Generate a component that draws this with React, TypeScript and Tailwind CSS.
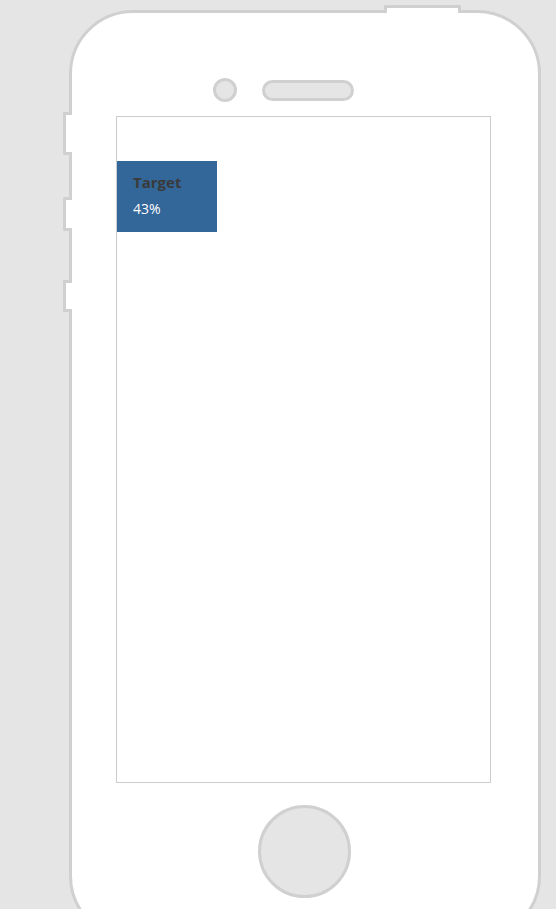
import React from "react";

export default function App() {
  return (
    <div className="w-[556px] h-[909px] overflow-hidden bg-[#e5e5e5] pt-[10px] pl-[69px]" style={{ fontFamily: '"Open Sans", "Noto Sans", sans-serif' }}>
      <div className="relative w-[472px] h-[930px] rounded-[64px] border-[3px] border-[#d0d0d0] bg-white">
        {/* top button */}
        <div className="absolute left-[312px] top-[-8px] w-[77px] h-[8px] border-[3px] border-b-0 border-[#d0d0d0] bg-white rounded-t-[2px]" />
        {/* left buttons */}
        <div className="absolute left-[-9px] top-[99px] w-[9px] h-[43px] border-[3px] border-r-0 border-[#d0d0d0] bg-white rounded-l-[2px]" />
        <div className="absolute left-[-9px] top-[184px] w-[9px] h-[34px] border-[3px] border-r-0 border-[#d0d0d0] bg-white rounded-l-[2px]" />
        <div className="absolute left-[-9px] top-[267px] w-[9px] h-[32px] border-[3px] border-r-0 border-[#d0d0d0] bg-white rounded-l-[2px]" />

        <div className="flex flex-col">
          <div className="flex items-center mt-[65px] ml-[141px] gap-[25px]">
            <div className="w-[24px] h-[24px] rounded-full border-[3px] border-[#d0d0d0] bg-[#e5e5e5]" />
            <div className="w-[92px] h-[21px] rounded-full border-[3px] border-[#d0d0d0] bg-[#e5e5e5]" />
          </div>
          <div className="mt-[14px] ml-[44px] w-[375px] h-[667px] border border-[#cccccc] bg-white">
            <div className="mt-[44px] w-[100px] h-[71px] bg-[#336699] pl-[16px] pt-[11px]">
              <div className="text-[15px] font-bold text-[#3a3a3a] leading-[20px]">Target</div>
              <div className="text-[14px] text-white leading-[18px] mt-[8px]">43%</div>
            </div>
          </div>
          <div className="mt-[22px] ml-[186px] w-[93px] h-[93px] rounded-full border-[3px] border-[#d0d0d0] bg-[#e5e5e5]" />
        </div>
      </div>
    </div>
  );
}
